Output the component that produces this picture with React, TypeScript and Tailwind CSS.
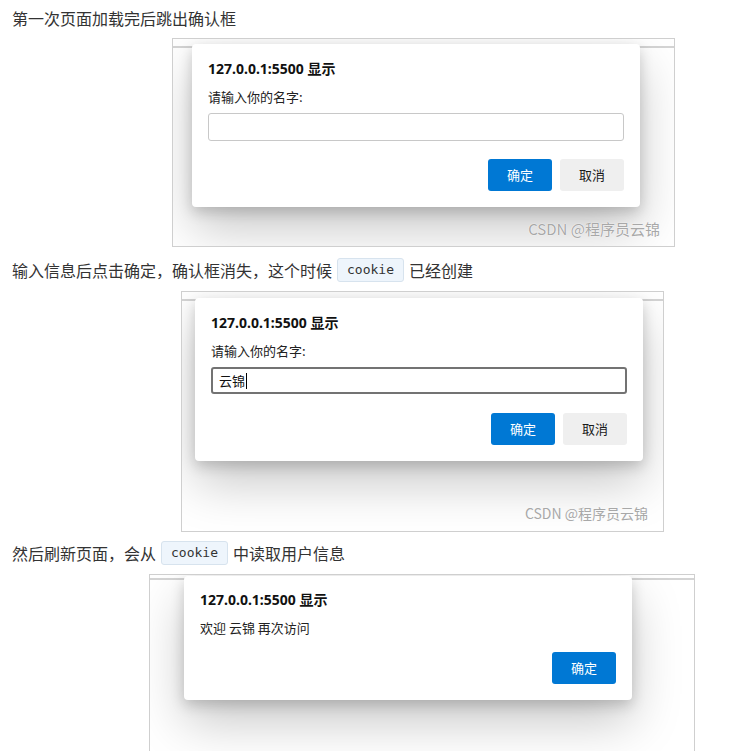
import React from 'react';

const cjk = { fontFamily: '"Noto Sans CJK SC", "Noto Sans", sans-serif' };
const ui = { fontFamily: '"Noto Sans", "Noto Sans CJK SC", sans-serif' };

const Code: React.FC<{ children: React.ReactNode }> = ({ children }) => (
  <span
    className="inline-flex items-center h-[24px] px-[9px] mx-[5px] rounded-[3px] border border-[#d7e3ee] bg-[#eef5fc] text-[13px] text-[#333] align-middle"
    style={{ fontFamily: '"DejaVu Sans Mono", "Liberation Mono", monospace' }}
  >
    {children}
  </span>
);

const Watermark: React.FC<{ size: string; className: string }> = ({ size, className }) => (
  <div
    className={`absolute ${size} ${className} text-[#a8a8a8] leading-none`}
    style={{ ...cjk, textShadow: '0 0 1px #fff, 0 0 1px #fff' }}
  >
    CSDN @程序员云锦
  </div>
);

const Button: React.FC<{ primary?: boolean; children: React.ReactNode }> = ({ primary, children }) => (
  <div
    className={`w-[64px] h-[32px] rounded-[3px] flex items-center justify-center text-[13px] ${
      primary ? 'bg-[#0078d4] text-white' : 'bg-[#efefef] text-[#1a1a1a]'
    }`}
    style={cjk}
  >
    {children}
  </div>
);

const dialogShadow =
  'absolute w-[448px] bg-white rounded-[4px] px-[16px] pb-[16px] shadow-[0_22px_50px_rgba(0,0,0,0.22),0_5px_14px_rgba(0,0,0,0.18)]';

export default function App() {
  return (
    <div className="bg-white min-h-[751px] px-[12px] pt-[5px] text-[16px] text-[#333]" style={cjk}>
      <p className="h-[26px] leading-[26px]">第一次页面加载完后跳出确认框</p>

      {/* shot 1 */}
      <div className="relative ml-[160px] mt-[7px] w-[503px] h-[209px] border border-[#cfcfcf] overflow-hidden bg-white">
        <div className="mt-[7px] h-[2px] bg-[#d4d4d4]" />
        <div className={`${dialogShadow} left-[19px] top-[5px] h-[163px]`}>
          <div className="pt-[15px] text-[14px] font-bold text-[#111] leading-[20px]" style={ui}>
            127.0.0.1:5500 显示
          </div>
          <div className="mt-[8px] text-[13px] leading-[20px] text-[#222]" style={cjk}>
            请输入你的名字:
          </div>
          <div className="mt-[6px] h-[28px] rounded-[3px] border border-[#c8c8c8]" />
          <div className="mt-[18px] flex justify-end gap-[8px]">
            <Button primary>确定</Button>
            <Button>取消</Button>
          </div>
        </div>
        <Watermark size="text-[15px]" className="right-[14px] bottom-[10px]" />
      </div>

      <p className="mt-[10px] h-[26px] leading-[26px] flex items-center">
        输入信息后点击确定，确认框消失，这个时候<Code>cookie</Code>已经创建
      </p>

      {/* shot 2 */}
      <div className="relative ml-[169px] mt-[8px] w-[483px] h-[241px] border border-[#cfcfcf] overflow-hidden bg-white">
        <div className="mt-[7px] h-[2px] bg-[#d4d4d4]" />
        <div className={`${dialogShadow} left-[13px] top-[6px] h-[163px]`}>
          <div className="pt-[15px] text-[14px] font-bold text-[#111] leading-[20px]" style={ui}>
            127.0.0.1:5500 显示
          </div>
          <div className="mt-[8px] text-[13px] leading-[20px] text-[#222]" style={cjk}>
            请输入你的名字:
          </div>
          <div className="mt-[6px] h-[27px] rounded-[3px] border-2 border-[#737373] flex items-center pl-[6px] text-[13px] text-[#111]" style={cjk}>
            云锦
            <span className="inline-block w-[1px] h-[16px] bg-black ml-[1px]" />
          </div>
          <div className="mt-[19px] flex justify-end gap-[8px]">
            <Button primary>确定</Button>
            <Button>取消</Button>
          </div>
        </div>
        <Watermark size="text-[14px]" className="right-[15px] bottom-[11px]" />
      </div>

      <p className="mt-[8px] h-[26px] leading-[26px] flex items-center">
        然后刷新页面，会从<Code>cookie</Code>中读取用户信息
      </p>

      {/* shot 3 */}
      <div className="relative ml-[137px] mt-[8px] w-[546px] h-[200px] border border-[#cfcfcf] overflow-hidden bg-white">
        <div className="mt-[3px] h-[2px] bg-[#d4d4d4]" />
        <div className={`${dialogShadow} left-[34px] top-[1px] h-[124px]`}>
          <div className="pt-[14px] text-[14px] font-bold text-[#111] leading-[20px]" style={ui}>
            127.0.0.1:5500 显示
          </div>
          <div className="mt-[8px] text-[13px] leading-[20px] text-[#222]" style={cjk}>
            欢迎 云锦 再次访问
          </div>
          <div className="mt-[14px] flex justify-end">
            <Button primary>确定</Button>
          </div>
        </div>
      </div>
    </div>
  );
}
